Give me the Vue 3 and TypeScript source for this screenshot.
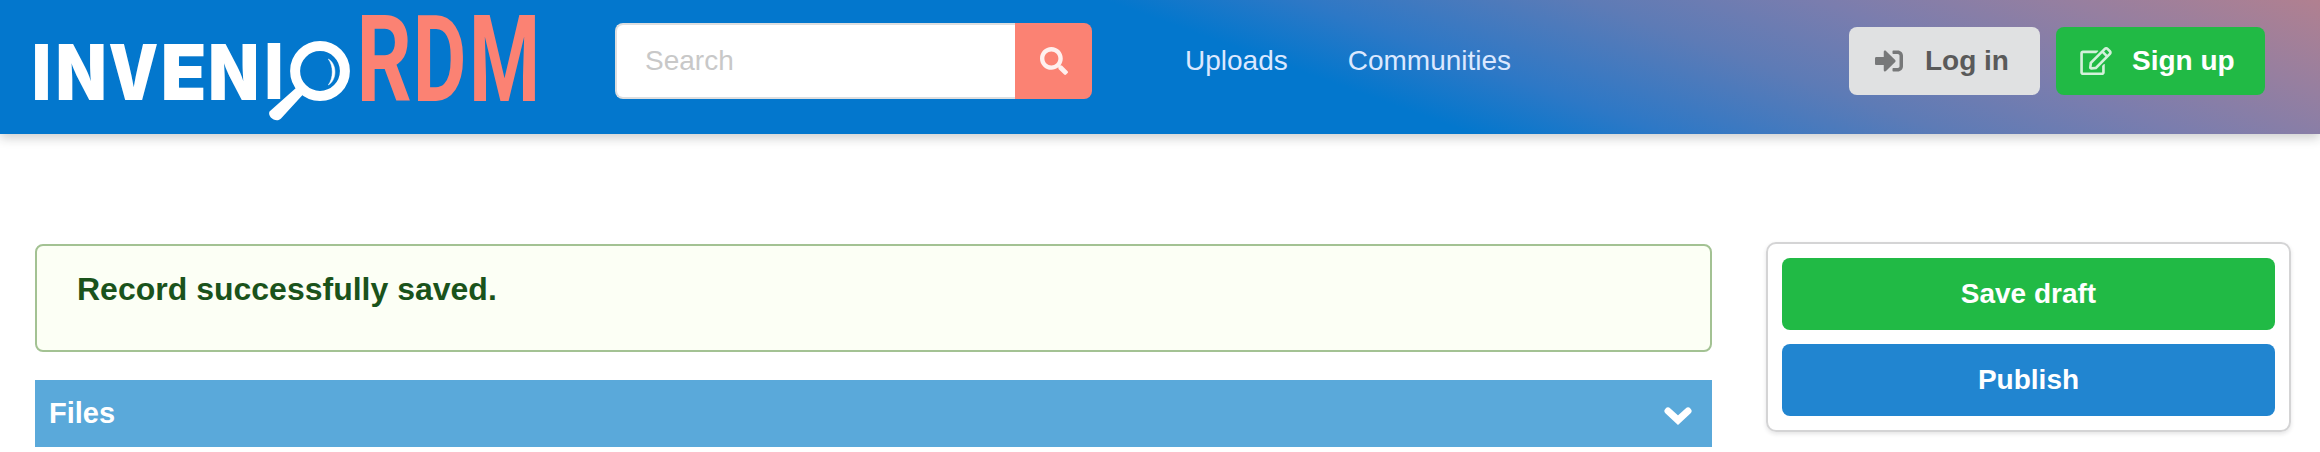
<script setup lang="ts">
interface Glyph { char: string; x: number; y: number; stretch: number }

const wordmark: Glyph[] = [
  { char: 'I', x: 31.9, y: 100.3, stretch: 0.845 },
  { char: 'N', x: 55.8, y: 100.3, stretch: 0.858 },
  { char: 'V', x: 108.6, y: 100.3, stretch: 0.814 },
  { char: 'E', x: 160.8, y: 100.3, stretch: 0.97 },
  { char: 'N', x: 208.3, y: 100.3, stretch: 0.858 },
  { char: 'I', x: 264.7, y: 99.3, stretch: 0.82 },
]
const suffix: Glyph[] = [
  { char: 'R', x: 356.4, y: 101.3, stretch: 0.72 },
  { char: 'D', x: 412.8, y: 101.3, stretch: 0.688 },
  { char: 'M', x: 468.9, y: 101.3, stretch: 0.677 },
]
const links: string[] = ['Uploads', 'Communities']
const place = (g: Glyph): string => `translate(${g.x} ${g.y}) scale(${g.stretch} 1)`
</script>

<template>
  <div class="page">
    <header class="navbar">
      <svg class="logo" width="540" height="134" viewBox="0 0 540 134">
        <text v-for="(g, i) in wordmark" :key="i" class="word" :transform="place(g)">{{ g.char }}</text>
        <circle cx="320" cy="71" r="24.9" fill="none" stroke="#fff" stroke-width="10" />
        <path d="M328.300 59C337.200 64 337.200 80 328.300 85C333.600 78 333.600 66 328.300 59Z" fill="#fff" stroke="#fff" stroke-width=".5" />
        <path d="M296.500 87.500L303 94.500L281 118.500C276.500 123.500 267 117 269.500 111.500Z" fill="#fff" />
        <text v-for="g in suffix" :key="g.char" class="rdm" :transform="place(g)">{{ g.char }}</text>
      </svg>
      <form class="search" @submit.prevent>
        <input type="text" placeholder="Search" aria-label="Search" />
        <button class="search-button" aria-label="Search">
          <svg width="28" height="28" viewBox="0 0 512 512"><path fill="currentColor" d="M505 442.700L405.300 343c-4.500-4.500-10.600-7-17-7H372c27.600-35.300 44-79.700 44-128C416 93.100 322.900 0 208 0S0 93.100 0 208s93.100 208 208 208c48.300 0 92.700-16.400 128-44v16.300c0 6.400 2.500 12.500 7 17l99.700 99.700c9.400 9.400 24.600 9.400 33.900 0l28.300-28.300c9.400-9.400 9.400-24.600.1-34zM208 336c-70.700 0-128-57.200-128-128 0-70.700 57.200-128 128-128 70.700 0 128 57.200 128 128 0 70.700-57.200 128-128 128z" /></svg>
        </button>
      </form>
      <nav class="links"><a v-for="l in links" :key="l">{{ l }}</a></nav>
      <div class="auth">
        <button class="login">
          <svg width="28" height="28" viewBox="0 0 512 512"><path fill="currentColor" d="M416 448h-84c-6.600 0-12-5.400-12-12v-40c0-6.600 5.400-12 12-12h84c17.700 0 32-14.300 32-32V160c0-17.700-14.300-32-32-32h-84c-6.600 0-12-5.400-12-12V76c0-6.600 5.400-12 12-12h84c53 0 96 43 96 96v192c0 53-43 96-96 96zm-47-209L201 71c-15-15-41-4.500-41 17v96H24c-13.300 0-24 10.700-24 24v96c0 13.300 10.700 24 24 24h136v96c0 21.500 26 32 41 17l168-168c9.300-9.400 9.300-24.600 0-34z" /></svg>
          <span>Log in</span>
        </button>
        <button class="signup">
          <svg width="32" height="28" viewBox="0 0 576 512"><path fill="currentColor" d="M402.300 344.900l32-32c5-5 13.700-1.500 13.700 5.700V464c0 26.500-21.500 48-48 48H48c-26.500 0-48-21.500-48-48V112c0-26.500 21.500-48 48-48h273.500c7.100 0 10.700 8.600 5.700 13.700l-32 32c-1.500 1.500-3.500 2.300-5.700 2.300H48v352h352V350.500c0-2.100.8-4.100 2.300-5.600zm156.600-201.800L296.300 405.700l-90.400 10c-26.200 2.900-48.500-19.200-45.600-45.600l10-90.400L432.900 17.100c22.900-22.900 59.900-22.900 82.700 0l43.200 43.200c22.900 22.900 22.900 60 .1 82.800zM460.100 174L402 115.900 216.200 301.800l-7.300 65.300 65.300-7.300L460.100 174zm64.800-79.700l-43.200-43.200c-4.100-4.100-10.800-4.100-14.800 0L436 82l58.100 58.100 30.900-30.900c4-4.200 4-10.800-.1-14.900z" /></svg>
          <span>Sign up</span>
        </button>
      </div>
    </header>
    <main class="content">
      <section class="main-column">
        <div class="message">Record successfully saved.</div>
        <div class="accordion">
          <span>Files</span>
          <svg width="28" height="24" viewBox="0 0 28 24"><path d="M4 9L14 18.200L24 9" fill="none" stroke="#fff" stroke-width="7" stroke-linecap="round" /></svg>
        </div>
      </section>
      <aside class="actions">
        <button class="save">Save draft</button>
        <button class="publish">Publish</button>
      </aside>
    </main>
  </div>
</template>

<style>
html, body { margin: 0; background: #fff; overflow: hidden; }
</style>

<style scoped>
.page { width: 2320px; height: 452px; overflow: hidden; background: #fff; font-family: "Liberation Sans", Arial, sans-serif; }
.page * { box-sizing: border-box; }
button { border: 0; margin: 0; padding: 0; font: bold 28px/34px "Liberation Sans", Arial, sans-serif; border-radius: 8px; color: #fff; display: flex; align-items: center; justify-content: center; }
.navbar { height: 134px; display: flex; background: linear-gradient(20deg, rgb(3, 119, 205) 54.8%, rgb(45, 120, 198) 62%, rgb(93, 123, 182) 72.600%, rgb(122, 125, 174) 81.300%, rgb(150, 127, 160) 90.500%, rgb(177, 128, 144) 100%); box-shadow: 0 4px 10px rgba(34, 36, 38, .22); }
.logo { flex: none; overflow: visible; }
.word { font: 900 77px Inter, sans-serif; fill: #fff; }
.rdm { font: bold 120px Roboto, sans-serif; fill: #fb8273; }
.search { display: flex; width: 477px; height: 76px; margin: 23px 0 0 75px; }
.search input { width: 400px; height: 76px; padding: 0 28px; border: 2px solid #dededf; border-right: 0; border-radius: 8px 0 0 8px; background: #fff; font: 28px "Liberation Sans", Arial, sans-serif; outline: none; }
.search input::placeholder { color: #c8c8c8; opacity: 1; }
.search-button { width: 77px; height: 76px; background: #fb8273; border-radius: 0 8px 8px 0; color: #fff0ee; }
.links { display: flex; gap: 60px; margin: 44px 0 0 93px; color: #dbe8ff; font-size: 28px; line-height: 34px; }
.auth { display: flex; gap: 16px; margin: 27px 55px 0 auto; }
.auth button { height: 68px; justify-content: flex-start; }
.auth .login { width: 191px; padding-left: 26px; background: #e0e1e2; color: #5a5a5a; }
.login svg { color: #777879; margin-right: 22px; }
.auth .signup { width: 209px; padding-left: 24px; background: #21ba45; }
.signup svg { color: #d3f1da; margin-right: 20px; }
.content { display: flex; padding: 108px 29px 0 35px; }
.main-column { width: 1677px; margin-top: 2px; }
.message { height: 108px; padding: 24px 40px; border: 2px solid #a3c293; border-radius: 8px; background: #fcfff5; color: #1a531b; font-weight: bold; font-size: 32px; line-height: 38px; }
.accordion { height: 67px; margin-top: 28px; padding: 0 20px 0 14px; background: #5aa9da; color: #fff; display: flex; justify-content: space-between; align-items: center; font-weight: bold; font-size: 29px; }
.actions { width: 525px; height: 190px; margin-left: auto; padding: 14px; border: 2px solid #d4d4d5; border-radius: 10px; box-shadow: 0 2px 4px rgba(34, 36, 38, .12); }
.actions button { width: 100%; height: 72px; }
.save { background: #21ba45; }
.actions .publish { margin-top: 14px; background: #2185d0; }
</style>
